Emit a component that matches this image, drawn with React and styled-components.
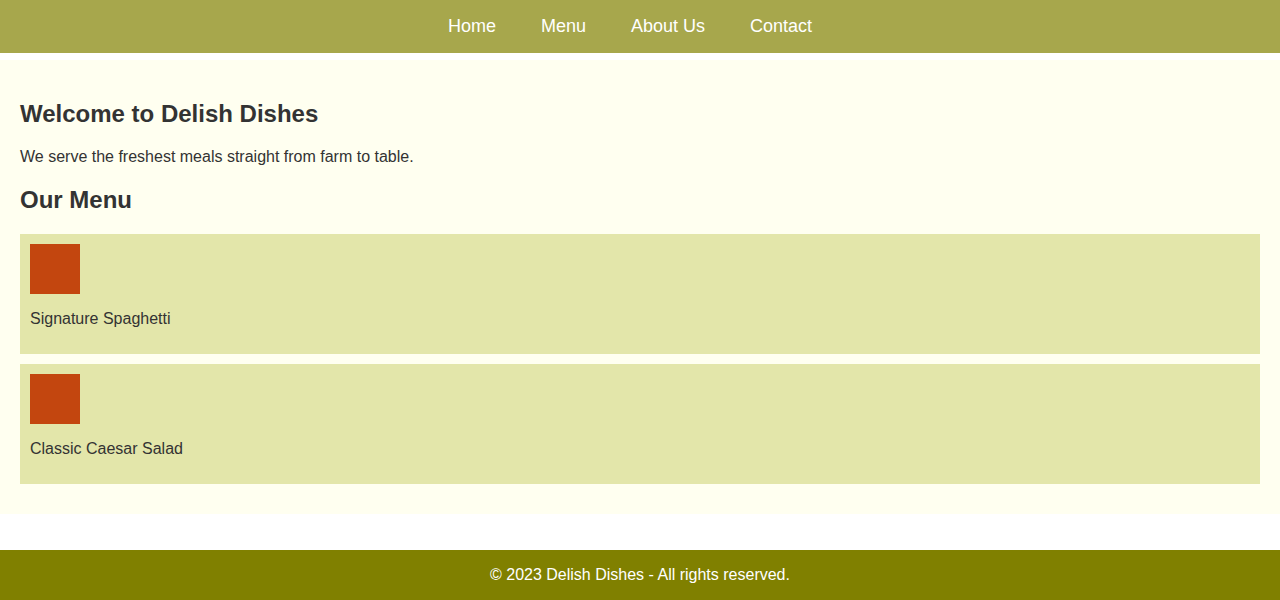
import styled, { createGlobalStyle } from 'styled-components';

const GlobalStyle = createGlobalStyle`
  body {
    margin: 0;
    font-family: "Liberation Sans", Arial, sans-serif;
    color: #333;
    background: #fff;
  }
`;

const menuItems = ['Signature Spaghetti', 'Classic Caesar Salad'];

export default function App() {
  return (
    <>
      <GlobalStyle />
      <Header>
        <NavList>
          <NavItem>Home</NavItem>
          <NavItem>Menu</NavItem>
          <NavItem>About Us</NavItem>
          <NavItem>Contact</NavItem>
        </NavList>
      </Header>
      <Main>
        <Title>Welcome to Delish Dishes</Title>
        <Text>We serve the freshest meals straight from farm to table.</Text>
        <Title>Our Menu</Title>
        {menuItems.map((item) => (
          <MenuCard key={item}>
            <Thumb />
            <Text>{item}</Text>
          </MenuCard>
        ))}
      </Main>
      <Footer>© 2023 Delish Dishes - All rights reserved.</Footer>
    </>
  );
}

const Header = styled.header`
  height: 53px;
  background: #a7a74c;
  display: flex;
  align-items: center;
  justify-content: center;
`;
const NavList = styled.ul`
  display: flex;
  gap: 45px;
  list-style: none;
  margin: 0;
  padding: 0 20px 0 0;
`;
const NavItem = styled.li`
  color: #fff;
  font-size: 18px;
  cursor: pointer;
`;
const Main = styled.main`
  margin-top: 7px;
  padding: 20px;
  background: #fffff0;
`;
const Title = styled.h2`
  font-size: 24px;
  margin: 20px 0;
  color: #333;
`;
const Text = styled.p`
  font-size: 16px;
  margin: 16px 0;
`;
const MenuCard = styled.div`
  background: #e3e6aa;
  padding: 10px;
  margin-bottom: 10px;
  ${Text} {
    margin-bottom: 16px;
  }
`;
const Thumb = styled.div`
  width: 50px;
  height: 50px;
  background: #c3460f;
`;
const Footer = styled.footer`
  margin-top: 36px;
  height: 50px;
  background: #808000;
  color: #fff;
  font-size: 16px;
  display: flex;
  align-items: center;
  justify-content: center;
`;
